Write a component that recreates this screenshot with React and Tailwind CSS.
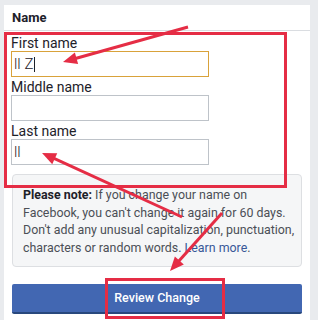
import React from 'react';

const RED = '#e52d45';

function Arrow({ x1, y1, x2, y2 }) {
    // line from tail (x1,y1) to tip (x2,y2) with a filled head
    const dx = x2 - x1;
    const dy = y2 - y1;
    const len = Math.hypot(dx, dy);
    const ux = dx / len;
    const uy = dy / len;
    const hl = 14;
    const hw = 6;
    const bx = x2 - ux * hl;
    const by = y2 - uy * hl;
    const p1 = `${bx - uy * hw},${by + ux * hw}`;
    const p2 = `${bx + uy * hw},${by - ux * hw}`;
    return (
        <g>
            <line x1={x1} y1={y1} x2={bx + ux * 2} y2={by + uy * 2} stroke={RED} strokeWidth="3" />
            <polygon points={`${x2},${y2} ${p1} ${p2}`} fill={RED} />
        </g>
    );
}

function Field({ label, value, focused, cursor }) {
    return (
        <div>
            <div className="text-[14px] leading-[16px] text-[#1d2129] h-[16px]">{label}</div>
            <div
                className={`w-[198px] h-[26px] border bg-white flex items-center px-[2px] text-[15px] font-light text-[#1d2129] ${focused ? 'border-[#d9a23a]' : 'border-[#bec3c9]'}`}
            >
                <span>{value}</span>
                {cursor && <span className="w-px h-[15px] bg-[#1d2129] ml-px" />}
            </div>
        </div>
    );
}

export default function App() {
    return (
        <div
            className="relative w-[318px] h-[320px] overflow-hidden bg-[#e9ebee] pt-[5px] pl-[4px] pr-[8px]"
            style={{ fontFamily: 'Roboto, "Liberation Sans", sans-serif' }}
        >
            <div className="bg-white h-[315px]">
                {/* Header */}
                <div className="h-[26px] border-b border-[#dadde1] px-[8px] pt-[5px] text-[13px] leading-[15px] font-bold text-[#1d2129]">
                    Name
                </div>

                {/* Fields */}
                <div className="px-[7px] pt-[4px] flex flex-col gap-[2px]">
                    <Field label="First name" value="ll Z" focused cursor />
                    <Field label="Middle name" value="" />
                    <Field label="Last name" value="ll" />
                </div>

                {/* Note */}
                <div className="mx-[8px] mt-[9px] h-[93px] bg-[#f5f6f7] border border-[#dddfe2] rounded-[4px] pl-[10px] pr-[3px] pt-[11px] text-[12.4px] leading-[17.5px] text-[#4b4f56]">
                    <span className="font-bold text-[#1d2129]">Please note:</span> If you change your name on
                    Facebook, you can't change it again for 60 days. Don't add any unusual capitalization,
                    punctuation, characters or random words. <span className="text-[#385898]">Learn more</span>.
                </div>

                {/* Button */}
                <div className="mx-[8px] mt-[17px] h-[30px] bg-[#4267b2] border-b-2 border-[#29487d] rounded-[2px] flex items-center justify-center text-white text-[12.5px] font-medium">
                    Review Change
                </div>
            </div>

            {/* Annotations */}
            <svg className="absolute inset-0 pointer-events-none" width="318" height="320">
                <rect x="5.5" y="33.5" width="280" height="153" fill="none" stroke={RED} strokeWidth="3" />
                <rect x="106.5" y="279.5" width="117" height="38" fill="none" stroke={RED} strokeWidth="3" />
                <Arrow x1={188} y1={27} x2={63} y2={62} />
                <Arrow x1={182} y1={217} x2={42} y2={153} />
                <Arrow x1={222} y1={213} x2={170} y2={271} />
            </svg>
        </div>
    );
}
